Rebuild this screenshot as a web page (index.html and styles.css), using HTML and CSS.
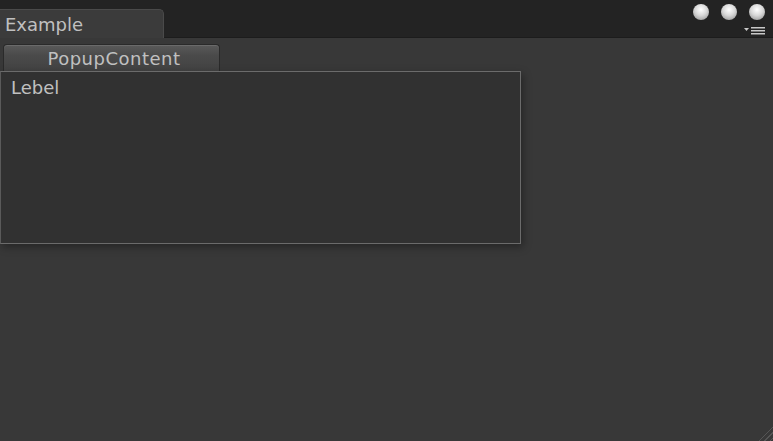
FILE: index.html
```html
<!DOCTYPE html>
<html lang="en">
<head>
    <meta charset="UTF-8">
    <title>Example</title>
    <link rel="stylesheet" href="styles.css">
</head>
<body>
    <div class="window">
        <!-- Title strip with the tab and window buttons -->
        <div class="titlebar">
            <div class="tab">Example</div>
            <div class="controls">
                <div class="dots">
                    <span class="dot"></span>
                    <span class="dot"></span>
                    <span class="dot"></span>
                </div>
                <svg class="menu" width="22" height="9" viewBox="0 0 22 9">
                    <polygon points="0,2 5,2 2.5,5" fill="#c8c8c8"/>
                    <rect x="7" y="1" width="14" height="1.5" fill="#c8c8c8"/>
                    <rect x="7" y="4" width="14" height="1.5" fill="#c8c8c8"/>
                    <rect x="7" y="7" width="14" height="1.5" fill="#c8c8c8"/>
                </svg>
            </div>
        </div>

        <div class="content">
            <button class="popup-button">PopupContent</button>
            <div class="popup">
                <span class="label">Lebel</span>
            </div>
        </div>

        <div class="grip"></div>
    </div>
</body>
</html>
```

FILE: styles.css
```css
* {
    margin: 0;
    padding: 0;
    box-sizing: border-box;
}

html, body {
    width: 773px;
    height: 441px;
    overflow: hidden;
    background-color: #383838;
    font-family: "DejaVu Sans", sans-serif;
}

.window {
    position: relative;
    width: 773px;
    height: 441px;
    display: flex;
    flex-direction: column;
}

.titlebar {
    height: 38px;
    background-color: #232323;
    border-bottom: 1px solid #1c1c1c;
    display: flex;
    align-items: flex-end;
    justify-content: space-between;
}

.tab {
    width: 164px;
    height: 29px;
    margin-bottom: -1px;
    padding: 4px 0 0 5px;
    background-color: #3b3b3b;
    border: 1px solid #4a4a4a;
    border-left: none;
    border-bottom: none;
    border-top-right-radius: 5px;
    color: #c0c0c0;
    font-size: 18px;
    line-height: 22px;
}

.controls {
    align-self: stretch;
    display: flex;
    flex-direction: column;
    align-items: flex-end;
    padding: 4px 8px 0 0;
}

.dots {
    display: flex;
    gap: 12px;
}

.dot {
    width: 16px;
    height: 16px;
    border-radius: 50%;
    background: radial-gradient(circle at 50% 35%, #ffffff 0%, #d8d8d8 45%, #8a8a8a 100%);
}

.menu {
    margin-top: 6px;
    margin-right: -1px;
}

.content {
    flex: 1;
    padding-top: 6px;
}

.popup-button {
    display: block;
    width: 217px;
    height: 27px;
    margin-left: 3px;
    padding-left: 5px;
    border: 1px solid #2a2a2a;
    border-bottom: none;
    border-radius: 4px 4px 0 0;
    background: linear-gradient(#5a5a5a, #4a4a4a 40%, #424242);
    color: #c0c0c0;
    font-family: "DejaVu Sans", sans-serif;
    font-size: 18px;
    letter-spacing: 0.5px;
    box-shadow: inset 0 1px 0 #6a6a6a;
}

.popup {
    width: 521px;
    height: 173px;
    background-color: #313131;
    border: 1px solid #6b6b6b;
    border-left-color: #5a5a5a;
    box-shadow: 2px 3px 8px rgba(0, 0, 0, 0.35);
    padding: 5px 10px;
}

.label {
    color: #c0c0c0;
    font-size: 18px;
}

/* resize grip in the corner */
.grip {
    position: absolute;
    right: 0;
    bottom: 0;
    width: 18px;
    height: 18px;
    background: repeating-linear-gradient(135deg, transparent 0 3px, #555 3px 4px);
    clip-path: polygon(100% 0, 100% 100%, 0 100%);
}
```
